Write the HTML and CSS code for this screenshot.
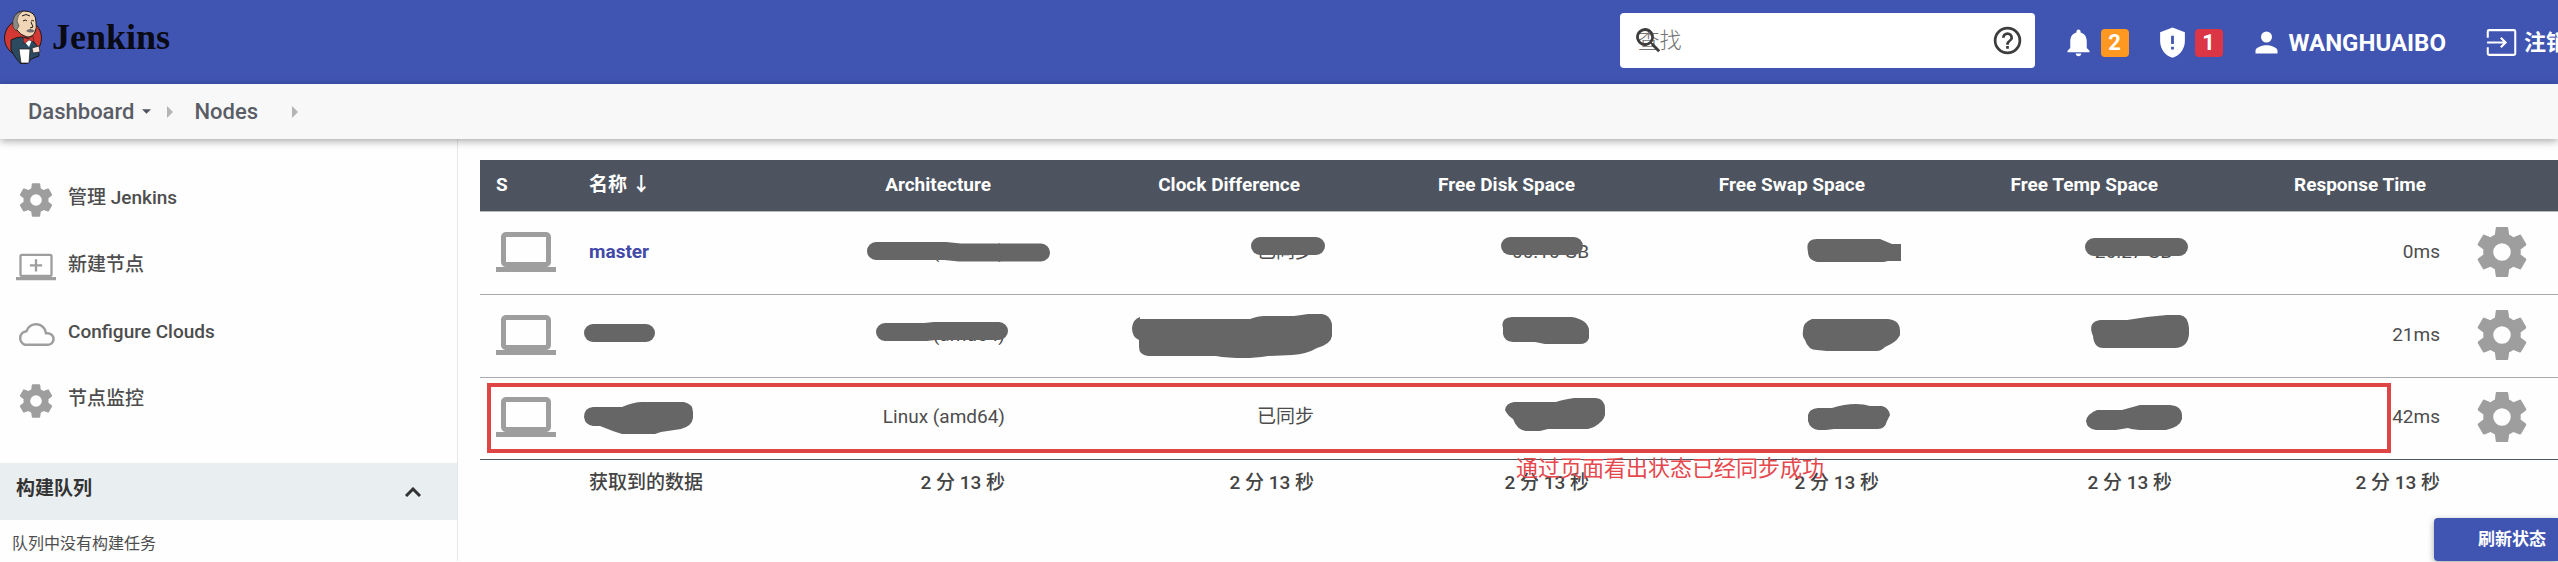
FILE: index.html
```html
<!DOCTYPE html>
<html lang="zh-CN">
<head>
<meta charset="utf-8">
<title>Nodes [Jenkins]</title>
<link rel="stylesheet" href="styles.css">
</head>
<body>
<svg class="defs" aria-hidden="true">
  <symbol id="gear" viewBox="0 0 24 24"><path d="M19.430 12.980c.04-.32.07-.64.07-.98s-.03-.66-.07-.98l2.110-1.650c.19-.15.24-.42.12-.64l-2-3.460c-.12-.22-.39-.3-.61-.22l-2.490 1c-.52-.4-1.080-.73-1.690-.98l-.38-2.650C14.460 2.180 14.250 2 14 2h-4c-.25 0-.46.18-.49.42l-.38 2.650c-.61.25-1.170.59-1.690.98l-2.490-1c-.23-.09-.49 0-.61.22l-2 3.460c-.13.22-.07.49.12.64l2.110 1.650c-.04.32-.07.65-.07.98s.03.66.07.98l-2.110 1.650c-.19.15-.24.42-.12.64l2 3.460c.12.22.39.3.61.22l2.490-1c.52.4 1.080.73 1.690.98l.38 2.650c.03.24.24.42.49.42h4c.25 0 .46-.18.49-.42l.38-2.650c.61-.25 1.170-.59 1.690-.98l2.490 1c.23.09.49 0 .61-.22l2-3.460c.12-.22.07-.49-.12-.64l-2.110-1.650zM12 15.500a3.500 3.500 0 1 1 0-7 3.500 3.500 0 0 1 0 7z"/></symbol>
  <symbol id="laptop" viewBox="0 0 24 24"><path d="M20 18c1.100 0 1.990-.9 1.990-2L22 6c0-1.100-.9-2-2-2H4c-1.100 0-2 .9-2 2v10c0 1.100.9 2 2 2H0v2h24v-2h-4zM4 6h16v10H4V6z"/></symbol>
  <symbol id="triangle" viewBox="0 0 6 12"><path d="M0 0l6 6-6 6z"/></symbol>
</svg>

<header class="topbar">
  <a class="brand" href="#">
    <svg class="brand-logo" viewBox="0 0 40 54" aria-hidden="true">
      <circle cx="20" cy="28" r="18.500" fill="#d33833" stroke="#1d1919" stroke-width="1"/>
      <path d="M8 30q6-3 10-3l6 1 7 4 4 5 1 9-8 3-3 4-7 1-6-7-4-7z" fill="#2b4a60" stroke="#1d1919" stroke-width="1"/>
      <path d="M20 30l5-1 4 1-3 7z" fill="#fff"/>
      <path d="M20 27l5 2 5-3 1 6-5-2-5 4z" fill="#d33833" stroke="#1d1919" stroke-width=".5"/>
      <path d="M10 14Q10 1 21 1q12 0 12 11 1 6-1 10-2 5-8 5-7-2-10-7-3-1-4-6z" fill="#f0d6b7" stroke="#1d1919" stroke-width="1"/>
      <path d="M10 17Q8 3 20 1q-6 4-6 10l2 5-3 5z" fill="#8b8a86" stroke="#1d1919" stroke-width=".5"/>
      <path d="M23 21q4-4 9 0-4 3-9 0z" fill="#6d6b6d"/>
      <path d="M20 11q3-2 4 0M28 11q2-1 3 0M28 12l2 5-3 1M19 6q4-3 8 0" fill="none" stroke="#1d1919" stroke-width="1"/>
      <path d="M16 39h11l-1 14H18z" fill="#fff" stroke="#1d1919" stroke-width=".7"/>
      <path d="M29 38l7-2 1 6-7 1z" fill="#f6e6e0" stroke="#1d1919" stroke-width=".7"/>
    </svg>
    <span>Jenkins</span>
  </a>
  <form class="search" role="search">
    <label for="q" class="search-icon" aria-label="查找"><svg viewBox="0 0 24 24"><path d="M15.500 14h-.8l-.3-.3A6.500 6.500 0 1 0 13.700 14.400l.3.3v.8l5 5 1.500-1.500zM9.500 14a4.500 4.500 0 1 1 0-9 4.500 4.500 0 0 1 0 9z"/></svg></label>
    <input id="q" type="search" placeholder="查找">
    <a class="search-help" href="#" aria-label="Help"><svg viewBox="0 0 24 24"><path d="M11 18h2v-2h-2v2zm1-16a10 10 0 1 0 0 20 10 10 0 0 0 0-20zm0 18a8 8 0 1 1 0-16 8 8 0 0 1 0 16zm0-14a4 4 0 0 0-4 4h2a2 2 0 1 1 4 0c0 2-3 1.750-3 5h2c0-2.250 3-2.500 3-5a4 4 0 0 0-4-4z"/></svg></a>
  </form>
  <nav class="actions">
    <a href="#"><svg viewBox="0 0 24 24"><path d="M12 22c1.100 0 2-.9 2-2h-4c0 1.100.89 2 2 2zm6-6v-5c0-3.070-1.640-5.640-4.500-6.320V4a1.500 1.500 0 0 0-3 0v.68C7.630 5.360 6 7.920 6 11v5l-2 2v1h16v-1l-2-2z"/></svg><span class="badge">2</span></a>
    <a href="#"><svg viewBox="0 0 24 24"><path fill-rule="evenodd" d="M12 1L3 4.500V11c0 5.550 3.840 10.740 9 12 5.160-1.260 9-6.450 9-12V4.500zM11 7h2v6h-2zM11 15h2v2h-2z"/></svg><span class="badge badge-danger">1</span></a>
    <a class="user" href="#"><svg viewBox="0 0 24 24"><path d="M12 12a4 4 0 1 0 0-8 4 4 0 0 0 0 8zm0 2c-2.670 0-8 1.340-8 4v2h16v-2c0-2.660-5.330-4-8-4z"/></svg>WANGHUAIBO</a>
    <a href="#"><svg class="outline" viewBox="0 0 24 24"><path d="M2 8.500V4q0-1 1-1h18q1 0 1 1v16q0 1-1 1H3q-1 0-1-1v-4.500M1.500 12H15M11.500 8.500L15 12l-3.500 3.500"/></svg>注销</a>
  </nav>
</header>

<nav class="crumbs" aria-label="Breadcrumb">
  <a href="#">Dashboard</a>
  <svg class="caret" viewBox="0 0 10 5"><path d="M0 0h10L5 5z"/></svg>
  <svg class="sep"><use href="#triangle"/></svg>
  <a href="#">Nodes</a>
  <svg class="sep sep-last"><use href="#triangle"/></svg>
</nav>

<div class="layout">
  <aside class="sidebar">
    <nav class="tasks">
      <a href="#"><svg><use href="#gear"/></svg>管理 Jenkins</a>
      <a href="#"><svg viewBox="0 0 24 24"><path fill-rule="evenodd" d="M3.500 4h17q1.500 0 1.500 1.500v11q0 1.500-1.500 1.500H24v2H0v-2h3.500Q2 18 2 16.500v-11Q2 4 3.500 4zm-.1 1.400v11.200h17.200V5.400zM11.300 7.300h1.400v3h3v1.400h-3v3h-1.400v-3h-3v-1.400h3z"/></svg>新建节点</a>
      <a href="#"><svg class="outline" viewBox="0 0 24 24"><path d="M5.500 18.500h13.300a3.500 3.500 0 0 0 .4-7H18a6 6 0 0 0-11.700-1.200A4.200 4.200 0 0 0 5.500 18.500z"/></svg>Configure Clouds</a>
      <a href="#"><svg><use href="#gear"/></svg>节点监控</a>
    </nav>
    <section class="queue">
      <h2>构建队列<button type="button" aria-label="折叠"><svg viewBox="0 0 16 10"><path d="M1 9l7-7 7 7"/></svg></button></h2>
      <p>队列中没有构建任务</p>
    </section>
  </aside>

  <main class="content">
    <div class="nodes">
      <table>
        <colgroup><col class="c-icon"><col class="c-name"><col class="c-arch"><col class="c-clock"><col class="c-disk"><col class="c-swap"><col class="c-temp"><col class="c-resp"><col class="c-cfg"></colgroup>
        <thead>
          <tr><th class="l">S</th><th class="l">名称 ↓</th><th>Architecture</th><th>Clock Difference</th><th>Free Disk Space</th><th>Free Swap Space</th><th>Free Temp Space</th><th>Response Time</th><th></th></tr>
        </thead>
        <tbody>
          <tr><td class="l"><svg><use href="#laptop"/></svg></td><td class="l"><a href="#">master</a></td><td>Linux (amd64)</td><td>已同步</td><td>66.16 GB</td><td></td><td>26.27 GB</td><td>0ms</td><td class="l"><a href="#" aria-label="Configure"><svg><use href="#gear"/></svg></a></td></tr>
          <tr><td class="l"><svg><use href="#laptop"/></svg></td><td></td><td>Linux (amd64)</td><td></td><td></td><td></td><td></td><td>21ms</td><td class="l"><a href="#" aria-label="Configure"><svg><use href="#gear"/></svg></a></td></tr>
          <tr><td class="l"><svg><use href="#laptop"/></svg></td><td></td><td>Linux (amd64)</td><td>已同步</td><td></td><td></td><td></td><td>42ms</td><td class="l"><a href="#" aria-label="Configure"><svg><use href="#gear"/></svg></a></td></tr>
        </tbody>
        <tfoot>
          <tr><th></th><th class="l">获取到的数据</th><th>2 分 13 秒</th><th>2 分 13 秒</th><th>2 分 13 秒</th><th>2 分 13 秒</th><th>2 分 13 秒</th><th>2 分 13 秒</th><th></th></tr>
        </tfoot>
      </table>
      <svg class="marks" aria-hidden="true">
        <g transform="translate(-480 -160)">
          <g class="stroke">
            <path d="M876 251H945L960 252.500H1041"/>
            <path d="M1260 246H1316"/>
            <path d="M1510 246H1574"/>
            <path d="M2094 247H2179"/>
            <path d="M593 333H646"/>
            <path d="M885 332H925L935 331H999"/>
          </g>
          <g class="blob">
            <path d="M1817 239H1880L1892 244H1901V261H1888L1884 262H1817q-9-2-9-10q-3-13 9-13z"/>
            <path d="M1140 319H1250q8-3 14-3h30q8-1 14-2h14q8 1 10 10v12q-1 8-15 12q-10 6-25 7l-24 1q-14 2-23 2q-18 0-29-2h-68q-9-1-9-9v-7q-7-3-7-12q1-9 8-11z"/>
            <path d="M1512 317H1572q16 3 17 13v8q-2 6-9 6h-35l-10-2h-22q-9-1-10-8v-6q-3-10 9-11z"/>
            <path d="M1812 319H1888q12 1 12 12v4q-2 5-9 9l-6 3q-4 4-8 4h-50l-10-1q-9 0-12-10q-3-3-2-9q0-9 9-12z"/>
            <path d="M2101 320H2127l20-3 20-2h13q8 1 9 13v6q-1 13-13 14h-73q-9 0-10-12q-6-14 7-16z"/>
            <path d="M593 407H622q12-5 20-5h42q9 2 9 10v6q-1 8-12 11l-20 3-6 2h-33q-10-3-22-8h-7q-8-1-9-9 0-9 9-10z"/>
            <path d="M1514 402H1556q5-2 18-4h22q9 1 9 11v6q-1 6-11 12l-6 2h-40l-8 2h-14q-9-1-13-12q-6-4-8-9q1-7 9-8z"/>
            <path d="M1818 408H1832q12-4 24-4q8 0 14 2h12q7 2 8 9l-3 6q-2 8-9 8h-44l-8 1h-8q-8-1-10-9v-6q1-6 10-7z"/>
            <path d="M2097 410h25l18-5h30q12 1 12 11v3q-2 8-16 11h-22q-10 0-16-2l-12 2h-20q-9-1-10-9q1-7 11-11z"/>
          </g>
        </g>
      </svg>
      <div class="highlight"></div>
      <p class="note">通过页面看出状态已经同步成功</p>
    </div>
    <button class="refresh" type="button">刷新状态</button>
  </main>
</div>
</body>
</html>
```
FILE: styles.css
```css
* { box-sizing: border-box; }
body {
  margin: 0;
  min-height: 100vh;
  overflow: hidden;
  background: #fefefe;
  color: #4d4d4d;
  font: 19px/24px Roboto, "Noto Sans CJK SC", sans-serif;
}
a { color: inherit; text-decoration: none; }
h2, p { margin: 0; }
svg { display: block; flex: none; }
.defs { position: absolute; width: 0; height: 0; }

.topbar {
  display: flex;
  align-items: center;
  padding: 13px 0 16px 3px;
  background: #4054b2;
  color: #fff;
}
.brand {
  display: flex;
  align-items: center;
  gap: 9px;
  padding-bottom: 4px;
  margin-top: -3px;
  color: #0a0a14;
  font: bold 36px/48px "Liberation Serif", serif;
}
.brand-logo { width: 40px; height: 54px; }
.search {
  position: relative;
  display: flex;
  align-items: center;
  width: 415px;
  height: 55px;
  margin-left: auto;
  border-radius: 4px;
  background: #fff;
}
.search input {
  flex: 1;
  min-width: 0;
  height: 100%;
  padding: 0 18px;
  border: 0;
  background: none;
  font: 300 22px/32px Roboto, "Noto Sans CJK SC", sans-serif;
}
.search input::placeholder { color: #757575; }
.search-icon { position: absolute; left: 12px; }
.search svg { width: 33px; height: 33px; fill: #3d3d3d; }
.search-help { margin-right: 11px; }
.actions {
  display: flex;
  gap: 27px;
  margin: 0 -10px 0 27px;
  padding-top: 4px;
  font-size: 22px;
  font-weight: 700;
  white-space: nowrap;
}
.actions a { display: flex; align-items: center; gap: 6px; }
.actions svg { width: 33px; height: 33px; fill: #fff; }
.actions .outline { fill: none; stroke: #fff; stroke-width: 1.5; }
.actions .user { padding-right: 12px; font-size: 24px; }
.badge {
  width: 28px;
  border-radius: 4px;
  background: #ff9820;
  line-height: 28px;
  text-align: center;
}
.badge-danger { background: #dc3545; }

.crumbs {
  position: relative;
  display: flex;
  align-items: center;
  height: 55px;
  padding-left: 28px;
  background: #f8f8f8;
  box-shadow: 0 2px 8px rgba(0, 0, 0, .35);
  color: #5a5d66;
  font-size: 22px;
  font-weight: 500;
}
.caret { width: 9px; height: 5px; margin-left: 8px; fill: #4d545f; }
.sep { width: 6px; height: 12px; margin: 0 21px 0 16px; fill: #b4b4b4; }
.sep-last { margin-left: 34px; }

.layout { display: flex; align-items: stretch; }
.sidebar {
  flex: none;
  width: 458px;
  border-right: 1px solid #e4e6ea;
}
.tasks { padding: 26px 0 30px; }
.tasks a {
  display: flex;
  align-items: center;
  gap: 12px;
  height: 67px;
  padding: 0 0 1px 16px;
  font-weight: 500;
}
.tasks svg { width: 40px; height: 40px; margin-top: 3px; fill: #9e9e9e; }
.tasks .outline { fill: none; stroke: #9e9e9e; stroke-width: 1.5; }
.queue h2 {
  display: flex;
  align-items: center;
  justify-content: space-between;
  height: 57px;
  padding: 0 36px 6px 16px;
  background: #e9eef1;
  color: #333;
  font-size: 19px;
  font-weight: 700;
}
.queue button { padding: 6px 0 0; border: 0; background: none; }
.queue button svg { width: 16px; height: 10px; fill: none; stroke: #333; stroke-width: 3; }
.queue p { padding: 12px 12px 4px; font-size: 16px; }

.content {
  flex: 1;
  min-width: 0;
  display: flex;
  flex-direction: column;
  padding: 21px 0 0 22px;
}
.nodes { position: relative; }
table { width: 100%; table-layout: fixed; border-collapse: separate; border-spacing: 0; }
.c-icon { width: 93px; }
.c-name { width: 170px; }
.c-arch { width: 278px; }
.c-clock { width: 309px; }
.c-disk { width: 275px; }
.c-swap { width: 290px; }
.c-temp { width: 293px; }
.c-resp { width: 268px; }
.c-cfg { width: 102px; }
th, td { padding: 0 16px; text-align: right; white-space: nowrap; }
thead th {
  height: 52px;
  padding: 0 30px 2px 16px;
  border-bottom: 1px solid #b5b8bd;
  background: #4d545f;
  color: #fff;
  font-weight: 700;
}
td { height: 83px; padding-bottom: 3px; border-bottom: 1px solid #ababab; }
tbody tr:last-child td { height: 82px; border-bottom-color: #4d545f; }
td a { color: #4249a8; font-weight: 700; }
td svg { width: 60px; height: 60px; fill: #9e9e9e; }
thead .l, tbody .l, tfoot .l { padding-right: 0; text-align: left; }
tfoot th { height: 46px; color: #444; font-weight: 500; }

/* Annotations drawn over the node list */
.marks { position: absolute; top: 0; left: 0; width: 100%; height: 100%; }
.stroke { fill: none; stroke: #666; stroke-width: 18; stroke-linecap: round; stroke-linejoin: round; }
.blob { fill: #666; }
.highlight {
  position: absolute;
  top: 223px;
  left: 7px;
  width: 1904px;
  height: 70px;
  border: 4px solid #e04545;
}
.note {
  position: absolute;
  top: 297px;
  left: 1036px;
  color: #e5484d;
  font-size: 22px;
  white-space: nowrap;
}
.refresh {
  align-self: flex-end;
  margin-top: 12px;
  padding: 0 12px 0 44px;
  border: 0;
  border-radius: 4px 0 0 4px;
  background: #4054b2;
  box-shadow: 0 2px 6px rgba(0, 0, 0, .35);
  color: #fff;
  font: 700 17px/43px Roboto, "Noto Sans CJK SC", sans-serif;
}
```
